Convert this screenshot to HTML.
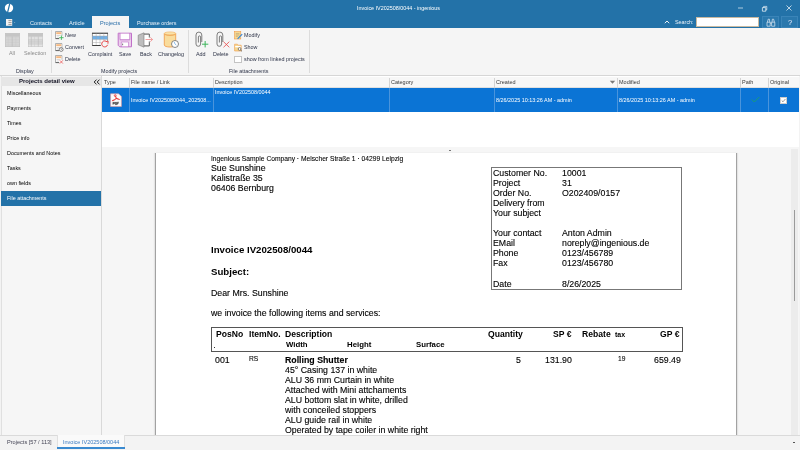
<!DOCTYPE html>
<html><head><meta charset="utf-8">
<style>
*{margin:0;padding:0;box-sizing:border-box}
html,body{-webkit-font-smoothing:antialiased;width:800px;height:450px;overflow:hidden;background:#f3f3f3;font-family:"Liberation Sans",sans-serif;font-size:5.4px;color:#333}
.a{position:absolute;white-space:nowrap;will-change:transform}
.t{line-height:1;}
#title{left:0;top:0;width:800px;height:28px;background:#2372a8}
#ribbon{left:0;top:28px;width:800px;height:48px;background:#f5f5f5;border-bottom:1px solid #d6d6d6}
.tab{top:20.5px;color:#e8f0f8;font-size:5.6px}
#ptab{left:92px;top:16px;width:37px;height:12px;background:#f5f5f5}
.rl{color:#2e3448;font-size:5.4px}
.vsep{width:1px;background:#dcdcdc}
#left{left:1px;top:76px;width:101px;height:359px;background:#f6f6f6;border-right:1px solid #d9d9d9;border-left:1px solid #e0e0e0}
#lhead{left:1px;top:77px;width:100px;height:9px;background:#e6e6e6}
.li{left:6.5px;color:#000;font-size:5.4px}
#sel{left:1px;top:191px;width:100px;height:15px;background:#2372a8}
#grid{left:102px;top:76px;width:697px;height:71px;background:#fff}
#ghead{left:102px;top:77px;width:697px;height:11px;background:#f7f7f7;border-bottom:1px solid #e0e0e0}
.gh{top:80px;color:#383838;font-size:5.5px}
.gsep{top:78px;width:1px;height:10px;background:#d4d4d4}
.rsep{top:88px;width:1px;height:24px;background:#4a94dc}
#row{left:102px;top:88px;width:697px;height:24px;background:#0b74d5}
.rt{color:#fff;font-size:5.45px}
#doc{left:102px;top:147px;width:697px;height:288px;background:#f6f6f6}
#page{left:155px;top:153px;width:582px;height:282px;background:#fff;border-left:1px solid #a2a2a2;border-right:1px solid #a2a2a2;box-shadow:-1px 0 1px rgba(0,0,0,0.07),1px 0 1px rgba(0,0,0,0.07)}
#rgray{left:739px;top:153px;width:52px;height:282px;background:#f6f6f6}
#track{left:791px;top:149px;width:7px;height:286px;background:#ececec}
#thumb{left:794px;top:210px;width:1px;height:91px;background:#9a9a9a}
#status{left:0;top:435px;width:800px;height:15px;background:#f3f3f3;border-top:1px solid #dadada}
.p{color:#000;font-size:8.78px;-webkit-text-stroke:0.12px #000}
.pb{color:#000;font-size:9.66px;font-weight:bold}
.ps{color:#000;font-size:6.7px;-webkit-text-stroke:0.08px #000}
.th{color:#000;font-size:8.6px;font-weight:bold}
.th2{color:#000;font-size:7.8px;font-weight:bold}
</style></head><body>
<div class="a" id="title"></div>
<!-- logo -->
<svg class="a" style="left:4px;top:3px" width="10" height="10" viewBox="0 0 10 10"><circle cx="5" cy="5" r="4.2" fill="#fff"/><path d="M5.8 0.6 L3.6 9.4" stroke="#2372a8" stroke-width="1.2"/></svg>
<div class="a t" style="left:357px;top:6px;color:#fff;font-size:5.4px">Invoice IV202508/0044 - ingenious</div>
<!-- window controls -->
<svg class="a" style="left:737px;top:6px" width="7" height="4" viewBox="0 0 7 4"><path d="M1 2H6" stroke="#fff" stroke-width="0.7" opacity="0.9"/></svg>
<svg class="a" style="left:761px;top:5px" width="7" height="7" viewBox="0 0 7 7"><path d="M1.4 2.6h3.4v3.6H1.4z" fill="none" stroke="#fff" stroke-width="0.7"/><path d="M2.6 2.6V1.4h3.2v3.4H4.8" fill="none" stroke="#fff" stroke-width="0.6"/></svg>
<svg class="a" style="left:786px;top:5px" width="6" height="6" viewBox="0 0 6 6"><path d="M0.5 0.5L5.5 5.5M5.5 0.5L0.5 5.5" stroke="#fff" stroke-width="0.7"/></svg>
<!-- tabs -->
<svg class="a" style="left:5px;top:19px" width="12" height="8" viewBox="0 0 12 8"><rect x="1" y="0" width="6.2" height="6.8" fill="#f2f2f2"/><path d="M3.4 1.4H6.6M3.4 3.4H6.6M3.4 5.4H6.6" stroke="#707070" stroke-width="0.7"/><path d="M9.1 3.1H10.3L9.7 3.8Z" fill="#ddd"/></svg>
<div class="a" id="ptab"></div>
<div class="a t tab" style="left:30px">Contacts</div>
<div class="a t tab" style="left:69px">Article</div>
<div class="a t tab" style="left:100px;color:#2a6ea8">Projects</div>
<div class="a t tab" style="left:137px;font-size:5.4px">Purchase orders</div>
<!-- search -->
<svg class="a" style="left:664px;top:20px" width="6" height="4" viewBox="0 0 6 4"><path d="M0.8 3.2L3 1L5.2 3.2" stroke="#fff" stroke-width="0.9" fill="none"/></svg>
<div class="a t" style="left:675px;top:19.5px;color:#e8f0f8;font-size:5.4px">Search:</div>
<div class="a" style="left:696px;top:17px;width:63px;height:10px;background:#fff;border:1px solid #c9b9a0"></div>
<div class="a" style="left:762px;top:16px;width:17px;height:12px;background:#2a78ad;border:1px solid #3a84b8"></div>
<svg class="a" style="left:766px;top:17.5px" width="10" height="9" viewBox="0 0 10 9"><path d="M1 4.2H4.2V8.2H1ZM5.6 4.2H8.8V8.2H5.6ZM1.4 4.2L2.2 1.2H3.4L3.8 4.2M6 4.2L6.4 1.2H7.6L8.4 4.2M4.2 5.2H5.6" fill="none" stroke="#e6eef6" stroke-width="0.7"/></svg>
<div class="a" style="left:781px;top:16px;width:17px;height:12px;background:#2a78ad;border:1px solid #3a84b8"></div>
<div class="a t" style="left:788px;top:18.5px;color:#eef;font-size:7.5px">?</div>

<div class="a" id="ribbon"></div>
<!-- Display group -->
<svg class="a" style="left:5px;top:33px" width="15" height="14" viewBox="0 0 15 14"><rect x="0.3" y="0.3" width="14.4" height="13.4" fill="#d5d5d5" stroke="#bdbdbd" stroke-width="0.6"/><rect x="0.3" y="0.3" width="14.4" height="3.3" fill="#c5c5c5"/><path d="M0.3 4.2H14.7M0.3 6.8H14.7M0.3 9.4H14.7M0.3 12H14.7M3.3 3.6V13.7M10.8 3.6V13.7" stroke="#c9c9c9" stroke-width="0.45"/><path d="M7.2 3.6V13.7" stroke="#b9b9b9" stroke-width="0.6"/></svg>
<svg class="a" style="left:28px;top:33px" width="15" height="14" viewBox="0 0 15 14"><rect x="0.3" y="0.3" width="14.4" height="13.4" fill="#d5d5d5" stroke="#bdbdbd" stroke-width="0.6"/><rect x="0.3" y="0.3" width="14.4" height="3.3" fill="#c5c5c5"/><rect x="0.6" y="3.8" width="13.8" height="2.4" fill="#e4e4e4"/><rect x="0.6" y="11.4" width="13.8" height="2" fill="#e4e4e4"/><path d="M0.3 3.8H14.7M0.3 6.3H14.7M0.3 8.8H14.7M0.3 11.3H14.7M6.5 3.6V13.7" stroke="#c9c9c9" stroke-width="0.45"/><path d="M3.3 3.6V13.7M10.3 3.6V13.7" stroke="#bbbbbb" stroke-width="0.6"/></svg>
<div class="a t rl" style="left:9px;top:51px;color:#8a8a8a">All</div>
<div class="a t rl" style="left:24px;top:51px;color:#8a8a8a">Selection</div>
<div class="a t rl" style="left:16px;top:69px">Display</div>
<div class="a vsep" style="left:50.5px;top:30px;height:43px"></div>
<!-- New / Convert / Delete -->
<svg class="a" style="left:55px;top:31px" width="9" height="9" viewBox="0 0 9 9"><path d="M0.6 7.6V0.6H6.8V4.8" fill="none" stroke="#666" stroke-width="0.6"/><rect x="0.9" y="0.9" width="5.6" height="6.5" fill="#fff"/><rect x="1.2" y="1.2" width="5.1" height="2" fill="#f6b880"/><path d="M1.5 4.5H5.5M1.5 6H4" stroke="#aaa" stroke-width="0.45"/><path d="M0.6 7.6H4.2" stroke="#333" stroke-width="0.8"/><path d="M4.2 6.7H8.6M6.4 4.5V8.9" stroke="#3cb45a" stroke-width="0.9"/></svg>
<svg class="a" style="left:55px;top:43px" width="9" height="9" viewBox="0 0 9 9"><path d="M0.6 7.6V0.6H6.8V4.8" fill="none" stroke="#666" stroke-width="0.6"/><rect x="0.9" y="0.9" width="5.6" height="6.5" fill="#fff"/><rect x="1.2" y="1.2" width="5.1" height="2" fill="#f6b880"/><path d="M1.5 4.5H5.5M1.5 6H4" stroke="#aaa" stroke-width="0.45"/><path d="M0.6 7.6H4.2" stroke="#333" stroke-width="0.8"/><circle cx="6.2" cy="6.5" r="1.9" fill="#fff" stroke="#333" stroke-width="0.6"/><path d="M6.2 5.4V6.6H7" stroke="#333" stroke-width="0.4" fill="none"/></svg>
<svg class="a" style="left:55px;top:55px" width="9" height="9" viewBox="0 0 9 9"><path d="M0.6 7.6V0.6H6.8V4.8" fill="none" stroke="#666" stroke-width="0.6"/><rect x="0.9" y="0.9" width="5.6" height="6.5" fill="#fff"/><rect x="1.2" y="1.2" width="5.1" height="2" fill="#f6b880"/><path d="M1.5 4.5H5.5M1.5 6H4" stroke="#aaa" stroke-width="0.45"/><path d="M0.6 7.6H4.2" stroke="#333" stroke-width="0.8"/><path d="M4.8 5.3L7.9 8.6M7.9 5.3L4.8 8.6" stroke="#e84848" stroke-width="0.7"/></svg>
<div class="a t rl" style="left:65px;top:33px">New</div>
<div class="a t rl" style="left:65px;top:45px">Convert</div>
<div class="a t rl" style="left:65px;top:57px">Delete</div>
<!-- Complaint -->
<svg class="a" style="left:91px;top:32px" width="19" height="17" viewBox="0 0 19 17"><rect x="1.3" y="1.3" width="15.4" height="12.2" fill="#fff" stroke="#6a6a6a" stroke-width="0.7"/><path d="M1 1.2H17" stroke="#444" stroke-width="1"/><rect x="1.6" y="4" width="14.8" height="3.4" fill="#6fb0e8"/><path d="M1.3 4H16.7M1.3 7.6H16.7M1.3 10.5H16.7M5.2 1.3V13.5M9 1.3V13.5M12.8 1.3V13.5" stroke="#a0a0a0" stroke-width="0.45"/><path d="M1.3 13.5H11" stroke="#333" stroke-width="0.9"/><circle cx="13.6" cy="12.3" r="4" fill="#f5f5f5"/><path d="M16.2 10.2A3 3 0 1 0 16.6 12.8" fill="none" stroke="#e84848" stroke-width="1"/><path d="M14.8 9.6L17.2 9.3L16.9 11.8" fill="none" stroke="#e84848" stroke-width="0.9"/></svg>
<div class="a t rl" style="left:88px;top:51.5px">Complaint</div>
<!-- Save -->
<svg class="a" style="left:117px;top:32px" width="16" height="16" viewBox="0 0 16 16"><path d="M1.2 1.2H14.5V14.8H2.7L1.2 13.3Z" fill="#ecd0ec" stroke="#c070c8" stroke-width="1"/><rect x="3.3" y="1.7" width="9" height="5.8" fill="#fff"/><path d="M3 7.8H12.8" stroke="#c070c8" stroke-width="0.9"/><path d="M3 1.2V7.8M12.8 1.2V7.8" stroke="#c070c8" stroke-width="0.7"/><rect x="4.2" y="10" width="7.2" height="4.8" fill="#fff" stroke="#c070c8" stroke-width="0.6"/><rect x="5.3" y="11.6" width="0.8" height="1.6" fill="#555"/></svg>
<div class="a t rl" style="left:119px;top:51.5px">Save</div>
<!-- Back -->
<svg class="a" style="left:137px;top:32px" width="17" height="16" viewBox="0 0 17 16"><path d="M7 2.2H12.3V4.5M12.3 10.5V13.8H7" fill="none" stroke="#555" stroke-width="0.8"/><rect x="7" y="2.2" width="5.3" height="11.6" fill="#fff"/><path d="M7 2.2H12.3V5.6M12.3 9.4V13.8H7" fill="none" stroke="#555" stroke-width="0.8"/><path d="M1.2 3.2L7 0.8V15.2L1.2 12.8Z" fill="#bdbdbd" stroke="#7a7a7a" stroke-width="0.6"/><path d="M8.5 7.5H15.5M13.3 5.3L15.6 7.5L13.3 9.7" fill="none" stroke="#f08a8a" stroke-width="0.8"/></svg>
<div class="a t rl" style="left:140px;top:51.5px">Back</div>
<!-- Changelog -->
<svg class="a" style="left:163px;top:31px" width="17" height="18" viewBox="0 0 17 18"><path d="M1.3 2.4V14C1.3 15.3 4 16 7 16S12.7 15.3 12.7 14V2.4" fill="#f9dc9c" stroke="#f0a050" stroke-width="0.9"/><ellipse cx="7" cy="2.4" rx="5.7" ry="1.5" fill="#fae2a8" stroke="#f2b060" stroke-width="0.6"/><path d="M1.6 3.4C3.5 4.8 10.5 4.8 12.4 3.4" fill="none" stroke="#eda050" stroke-width="0.8"/><circle cx="12" cy="13" r="3.5" fill="#fff" stroke="#6a6a6a" stroke-width="0.8"/><path d="M11.2 11L12 12.9L13.4 14.3" fill="none" stroke="#5aa0e0" stroke-width="0.7"/></svg>
<div class="a t rl" style="left:158px;top:51.5px">Changelog</div>
<div class="a t rl" style="left:101px;top:69px">Modify projects</div>
<div class="a vsep" style="left:188px;top:30px;height:43px"></div>
<!-- Add / Delete attachments -->
<svg class="a" style="left:195px;top:31px" width="15" height="17" viewBox="0 0 15 17"><path d="M6.8 11V4A2.9 2.9 0 0 0 1 4V13A2.3 2.3 0 0 0 5.6 13V6A1.1 1.1 0 0 0 3.4 6V11.5" fill="none" stroke="#707070" stroke-width="0.9"/><path d="M7 13.2H13.3M10.15 10V16.4" stroke="#3cb45a" stroke-width="1"/></svg>
<div class="a t rl" style="left:196px;top:51.5px">Add</div>
<svg class="a" style="left:216px;top:31px" width="15" height="17" viewBox="0 0 15 17"><path d="M6.8 11V4A2.9 2.9 0 0 0 1 4V13A2.3 2.3 0 0 0 5.6 13V6A1.1 1.1 0 0 0 3.4 6V11.5" fill="none" stroke="#707070" stroke-width="0.9"/><path d="M7.5 10.7L13.3 16.3M13.3 10.7L7.5 16.3" stroke="#e84848" stroke-width="0.8"/></svg>
<div class="a t rl" style="left:213px;top:51.5px">Delete</div>
<svg class="a" style="left:234px;top:31px" width="9" height="9" viewBox="0 0 9 9"><rect x="0.6" y="0.6" width="6.2" height="7.4" fill="#f8d890" stroke="#ee9a48" stroke-width="0.6"/><path d="M1.8 2.6H5.4M1.8 4H5.4M1.8 5.4H3.8" stroke="#9a8a70" stroke-width="0.45"/><path d="M3.6 7.8L8.2 3.2" stroke="#3a8ad8" stroke-width="1.2"/></svg>
<svg class="a" style="left:234px;top:43px" width="9" height="9" viewBox="0 0 9 9"><path d="M0.6 1.2H3.4L4.2 2.2H7.2V8H0.6Z" fill="#f8d890" stroke="#ee9a48" stroke-width="0.6"/><rect x="1.2" y="3" width="5.4" height="1.3" fill="#fff"/><circle cx="5.6" cy="6" r="1.4" fill="#fff" stroke="#444" stroke-width="0.6"/><path d="M6.6 7L8 8.4" stroke="#444" stroke-width="0.7"/></svg>
<div class="a t rl" style="left:244px;top:33px">Modify</div>
<div class="a t rl" style="left:244px;top:45px">Show</div>
<div class="a" style="left:234px;top:56px;width:8px;height:7px;background:#fff;border:1px solid #c4c4c4"></div>
<div class="a t rl" style="left:244px;top:57px">show from linked projects</div>
<div class="a t rl" style="left:229px;top:69px">File attachments</div>
<div class="a vsep" style="left:309px;top:30px;height:43px"></div>

<!-- left panel -->
<div class="a" id="left"></div>
<div class="a" id="lhead"></div>
<div class="a t" style="left:19px;top:78px;font-weight:bold;color:#112;font-size:6px">Projects detail view</div>
<svg class="a" style="left:93px;top:79px" width="8" height="6" viewBox="0 0 8 6"><path d="M3.5 0.6L1.2 3L3.5 5.4M6.5 0.6L4.2 3L6.5 5.4" stroke="#222" stroke-width="1" fill="none"/></svg>
<div class="a" id="sel"></div>
<div class="a t li" style="top:91px">Miscellaneous</div>
<div class="a t li" style="top:106px">Payments</div>
<div class="a t li" style="top:121px">Times</div>
<div class="a t li" style="top:136px">Price info</div>
<div class="a t li" style="top:151px">Documents and Notes</div>
<div class="a t li" style="top:166px">Tasks</div>
<div class="a t li" style="top:181px">own fields</div>
<div class="a t li" style="top:196px;color:#fff">File attachments</div>

<!-- grid -->
<div class="a" id="grid"></div>
<div class="a" id="ghead"></div>
<div class="a t gh" style="left:104px">Type</div>
<div class="a t gh" style="left:131px">File name / Link</div>
<div class="a t gh" style="left:215px">Description</div>
<div class="a t gh" style="left:391px">Category</div>
<div class="a t gh" style="left:496px">Created</div>
<svg class="a" style="left:609px;top:80px" width="7" height="5" viewBox="0 0 7 5"><path d="M0.8 0.8H6.2L3.5 3.8z" fill="#7a7a7a"/></svg>
<div class="a t gh" style="left:619px">Modified</div>
<div class="a t gh" style="left:742px">Path</div>
<div class="a t gh" style="left:770px">Original</div>
<div class="a gsep" style="left:129px"></div>
<div class="a gsep" style="left:213px"></div>
<div class="a gsep" style="left:389px"></div>
<div class="a gsep" style="left:494px"></div>
<div class="a gsep" style="left:617px"></div>
<div class="a gsep" style="left:740px"></div>
<div class="a gsep" style="left:768px"></div>
<div class="a" id="row"></div>
<div class="a rsep" style="left:129px"></div>
<div class="a rsep" style="left:213px"></div>
<div class="a rsep" style="left:389px"></div>
<div class="a rsep" style="left:494px"></div>
<div class="a rsep" style="left:617px"></div>
<div class="a rsep" style="left:740px"></div>
<div class="a rsep" style="left:768px"></div>
<svg class="a" style="left:110px;top:92.5px" width="12" height="14" viewBox="0 0 12 14"><path d="M0.6 0.8H8.6L11.4 3.6V13.6H0.6Z" fill="#fafafa" stroke="#e89a9a" stroke-width="0.6"/><circle cx="5.2" cy="2.6" r="0.9" fill="none" stroke="#e63a3a" stroke-width="0.9"/><path d="M5.6 3.4L6.4 5.4M6.3 5.3C5.5 6.4 4 7.2 2.6 7.6M6.3 5.3C7.2 5.9 8.4 6 9.3 6.4" fill="none" stroke="#e63a3a" stroke-width="1.1" stroke-linecap="round"/><path d="M3 9.2V11.6M3 9.4H4.6V10.6H3M5.4 9.2V11.6H6.6V9.4H5.4M7.3 11.6V9.3H8.9M7.3 10.4H8.5" fill="none" stroke="#333" stroke-width="0.75"/></svg>
<div class="a t rt" style="left:131px;top:98px">Invoice IV2025080044_202508...</div>
<div class="a t rt" style="left:215px;top:89.5px">Invoice IV202508/0044</div>
<div class="a t rt" style="left:496px;top:98px">8/26/2025 10:13:26 AM - admin</div>
<div class="a t rt" style="left:619px;top:98px">8/26/2025 10:13:26 AM - admin</div>
<svg class="a" style="left:751px;top:96px" width="9" height="7" viewBox="0 0 9 7"><path d="M0.8 3.5L3.3 6L8.3 1" stroke="#1aa36a" stroke-width="0.9" fill="none"/></svg>
<div class="a" style="left:780px;top:96.5px;width:7px;height:7px;background:#fff;border:0.5px solid #ccc"></div>
<svg class="a" style="left:781px;top:97.5px" width="5" height="5" viewBox="0 0 5 5"><path d="M0.7 2.5L2 3.8L4.4 1" stroke="#555" stroke-width="0.6" fill="none"/></svg>

<!-- document -->
<div class="a" id="doc"></div>
<div class="a" id="page"></div>
<div class="a" id="rgray"></div>
<div class="a" id="track"></div>
<div class="a" id="thumb"></div>

<div class="a t ps" style="left:211px;top:156px">Ingenious Sample Company · Melscher Straße 1 · 04299 Leipzig</div>
<div class="a t p" style="left:211px;top:164px">Sue Sunshine</div>
<div class="a t p" style="left:211px;top:174px">Kalistraße 35</div>
<div class="a t p" style="left:211px;top:184px">06406 Bernburg</div>

<div class="a" style="left:491px;top:167px;width:190.5px;height:122.5px;border:1px solid #777"></div>
<div class="a t p" style="left:493px;top:169px">Customer No.</div>
<div class="a t p" style="left:562px;top:169px">10001</div>
<div class="a t p" style="left:493px;top:179px">Project</div>
<div class="a t p" style="left:562px;top:179px">31</div>
<div class="a t p" style="left:493px;top:189px">Order No.</div>
<div class="a t p" style="left:562px;top:189px">O202409/0157</div>
<div class="a t p" style="left:493px;top:199px">Delivery from</div>
<div class="a t p" style="left:493px;top:209px">Your subject</div>
<div class="a t p" style="left:493px;top:229px">Your contact</div>
<div class="a t p" style="left:562px;top:229px">Anton Admin</div>
<div class="a t p" style="left:493px;top:239px">EMail</div>
<div class="a t p" style="left:562px;top:239px">noreply@ingenious.de</div>
<div class="a t p" style="left:493px;top:249px">Phone</div>
<div class="a t p" style="left:562px;top:249px">0123/456789</div>
<div class="a t p" style="left:493px;top:259px">Fax</div>
<div class="a t p" style="left:562px;top:259px">0123/456780</div>
<div class="a t p" style="left:493px;top:280px">Date</div>
<div class="a t p" style="left:562px;top:280px">8/26/2025</div>

<div class="a t pb" style="left:211px;top:245px">Invoice IV202508/0044</div>
<div class="a t pb" style="left:211px;top:267px">Subject:</div>
<div class="a t p" style="left:211px;top:289px">Dear Mrs. Sunshine</div>
<div class="a t p" style="left:211px;top:309px">we invoice the following items and services:</div>

<div class="a" style="left:211px;top:327px;width:472px;height:25px;border:1px solid #555"></div>
<div class="a t th" style="left:215.5px;top:330px">PosNo</div>
<div class="a t th" style="left:248.5px;top:330px">ItemNo.</div>
<div class="a t th" style="left:285px;top:330px">Description</div>
<div class="a t th" style="left:487.7px;top:330px">Quantity</div>
<div class="a t th" style="left:553px;top:330px">SP €</div>
<div class="a t th" style="left:581.8px;top:330px">Rebate</div>
<div class="a t th" style="left:660px;top:330px">GP €</div>
<div class="a t th2" style="left:614.8px;top:331px;font-size:7px">tax</div>
<div class="a t th2" style="left:286px;top:341px">Width</div>
<div class="a t th2" style="left:347px;top:341px">Height</div>
<div class="a t th2" style="left:416px;top:341px">Surface</div>
<div class="a" style="left:214px;top:347px;width:1px;height:1px;background:#333"></div>

<div class="a t p" style="left:215px;top:356px">001</div>
<div class="a t ps" style="left:248.5px;top:356px">RS</div>
<div class="a t p" style="left:285px;top:356px"><b>Rolling Shutter</b></div>
<div class="a t p" style="left:285px;top:366px">45° Casing 137 in white</div>
<div class="a t p" style="left:285px;top:376px">ALU 36 mm Curtain in white</div>
<div class="a t p" style="left:285px;top:386px">Attached with Mini attchaments</div>
<div class="a t p" style="left:285px;top:396px">ALU bottom slat in white, drilled</div>
<div class="a t p" style="left:285px;top:406px">with conceiled stoppers</div>
<div class="a t p" style="left:285px;top:416px">ALU guide rail in white</div>
<div class="a t p" style="left:285px;top:426px">Operated by tape coiler in white right</div>
<div class="a t p" style="left:515.5px;top:356px">5</div>
<div class="a t p" style="left:545.2px;top:356px">131.90</div>
<div class="a t ps" style="left:617.5px;top:356px">19</div>
<div class="a t p" style="left:653.8px;top:356px">659.49</div>

<div class="a" style="left:449px;top:150px;width:2px;height:1px;background:#777"></div>
<!-- status -->
<div class="a" id="status"></div>
<div class="a t" style="left:7px;top:439.5px;color:#445;font-size:5.6px">Projects [57 / 113]</div>
<div class="a" style="left:57px;top:435px;width:68px;height:14px;background:#fafafa;border-left:1px solid #e0e0e0;border-right:1px solid #e0e0e0"></div>
<div class="a" style="left:57px;top:447px;width:68px;height:1.5px;background:#3a8ad0"></div>
<div class="a t" style="left:63px;top:439.5px;color:#3a7ac0;font-size:5.5px">Invoice IV202508/0044</div>
<div class="a" style="left:793px;top:442px;width:2px;height:1px;background:#555"></div>
</body></html>
